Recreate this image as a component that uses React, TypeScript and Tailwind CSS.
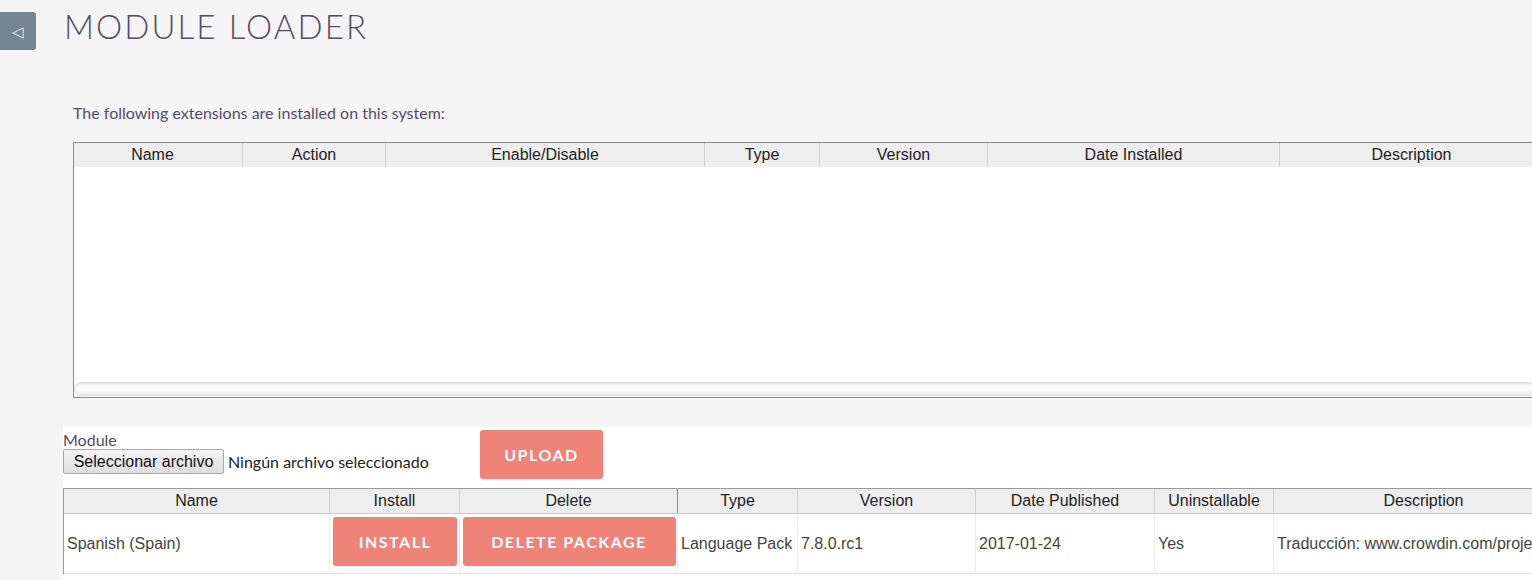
const installedCols = [
  { label: 'Name', w: 168, pad: 'pr-[11px]' },
  { label: 'Action', w: 143, pad: '' },
  { label: 'Enable/Disable', w: 319, pad: '' },
  { label: 'Type', w: 115, pad: '' },
  { label: 'Version', w: 168, pad: '' },
  { label: 'Date Installed', w: 292, pad: '' },
  { label: 'Description', w: 264, pad: '' },
];

const packageCols = [
  { label: 'Name', w: 265 },
  { label: 'Install', w: 130 },
  { label: 'Delete', w: 218 },
  { label: 'Type', w: 120 },
  { label: 'Version', w: 178 },
  { label: 'Date Published', w: 179 },
  { label: 'Uninstallable', w: 119 },
  { label: 'Description', w: 300 },
];

const lato = "font-['Lato','Noto_Sans',sans-serif]";
const arial = "font-['Liberation_Sans',Arial,sans-serif]";

function ActionButton({ label, className }: { label: string; className?: string }) {
  return (
    <button
      type="button"
      className={`flex items-center justify-center rounded-[3px] bg-[#f08377] text-[16px] font-bold tracking-[1.5px] text-white ${lato} ${className ?? ''}`}
    >
      {label}
    </button>
  );
}

export default function App() {
  return (
    <div className="relative h-[580px] w-[1532px] overflow-hidden bg-[#f5f5f5]">
      <div className="flex items-start">
        <button
          type="button"
          className="mt-[12px] flex h-[38px] w-[36px] items-center justify-center rounded-r-[3px] bg-[#778591] text-[15px] text-[#e8ecef]"
        >
          ◁
        </button>
        <h1 className={`ml-[28px] mt-[6px] text-[33px] font-light leading-[40px] tracking-[2.1px] text-[#534d64] ${lato}`}>
          MODULE LOADER
        </h1>
      </div>

      <p className={`ml-[73px] mt-[52px] text-[16px] leading-[22px] text-[#534d64] ${lato}`}>
        The following extensions are installed on this system:
      </p>

      {/* installed extensions */}
      <div className="ml-[73px] mt-[18px] h-[256px] w-[1480px] border border-r-0 border-[#8a8a8a] bg-white">
        <div className="flex h-[24px] bg-[#eeeeee]">
          {installedCols.map((c, i) => (
            <div
              key={c.label}
              style={{ width: c.w }}
              className={`flex shrink-0 items-center justify-center text-[16px] text-[#222] ${arial} ${c.pad} ${i > 0 ? 'border-l border-[#cfcfcf]' : ''}`}
            >
              {c.label}
            </div>
          ))}
        </div>
        <div className="h-[215px]" />
        <div className="h-[14px] rounded-l-full border border-[#dcdcdc] bg-gradient-to-b from-[#f3f3f3] via-white to-[#ececec] shadow-[inset_0_1px_2px_rgba(0,0,0,0.08)]" />
      </div>

      {/* upload + packages */}
      <div className="ml-[63px] mt-[29px] h-[200px] bg-white pt-[3px]">
        <div className="flex items-start">
          <div className="w-[417px]">
            <div className={`text-[16px] leading-[19px] text-[#534d64] ${lato}`}>Module</div>
            <div className="flex items-center">
              <button
                type="button"
                className={`h-[25px] w-[161px] rounded-[2px] border border-[#a9a9a9] bg-gradient-to-b from-[#f4f4f4] to-[#dedede] text-[16px] text-[#111] ${arial}`}
              >
                Seleccionar archivo
              </button>
              <span className={`ml-[4px] text-[16px] text-[#222] ${lato}`}>Ningún archivo seleccionado</span>
            </div>
          </div>
          <ActionButton label="UPLOAD" className="h-[49px] w-[123px] text-[15px]" />
        </div>

        <div className="mt-[9px] border-l border-t border-[#9a9a9a]">
          <div className="flex h-[25px] border-b border-[#c9c9c9] bg-[#eeeeee]">
            {packageCols.map((c, i) => (
              <div
                key={c.label}
                style={{ width: c.w }}
                className={`flex shrink-0 items-center justify-center text-[16px] text-[#222] ${arial} ${
                  i === 3 ? 'border-l border-[#8a8a8a]' : i > 0 ? 'border-l border-[#cfcfcf]' : ''
                }`}
              >
                {c.label}
              </div>
            ))}
          </div>
          <div className={`flex h-[60px] border-b border-[#e4e4e4] text-[16px] text-[#444] ${arial}`}>
            <div style={{ width: 265 }} className="flex shrink-0 items-center pl-[3px]">
              Spanish (Spain)
            </div>
            <div style={{ width: 130 }} className="flex shrink-0 items-start justify-center border-l border-[#ececec] pl-[1px] pt-[3px]">
              <ActionButton label="INSTALL" className="h-[49px] w-[124px]" />
            </div>
            <div style={{ width: 218 }} className="flex shrink-0 items-start justify-center border-l border-[#ececec] pl-[1px] pt-[3px]">
              <ActionButton label="DELETE PACKAGE" className="h-[49px] w-[213px]" />
            </div>
            <div style={{ width: 120 }} className="flex shrink-0 items-center border-l border-[#ececec] pl-[3px]">
              Language Pack
            </div>
            <div style={{ width: 178 }} className="flex shrink-0 items-center border-l border-[#ececec] pl-[3px]">
              7.8.0.rc1
            </div>
            <div style={{ width: 179 }} className="flex shrink-0 items-center border-l border-[#ececec] pl-[3px]">
              2017-01-24
            </div>
            <div style={{ width: 119 }} className="flex shrink-0 items-center border-l border-[#ececec] pl-[3px]">
              Yes
            </div>
            <div style={{ width: 300 }} className="flex shrink-0 items-center overflow-hidden whitespace-nowrap border-l border-[#ececec] pl-[3px]">
              Traducción: www.crowdin.com/project/suitecrmtranslations
            </div>
          </div>
        </div>
      </div>
    </div>
  );
}
